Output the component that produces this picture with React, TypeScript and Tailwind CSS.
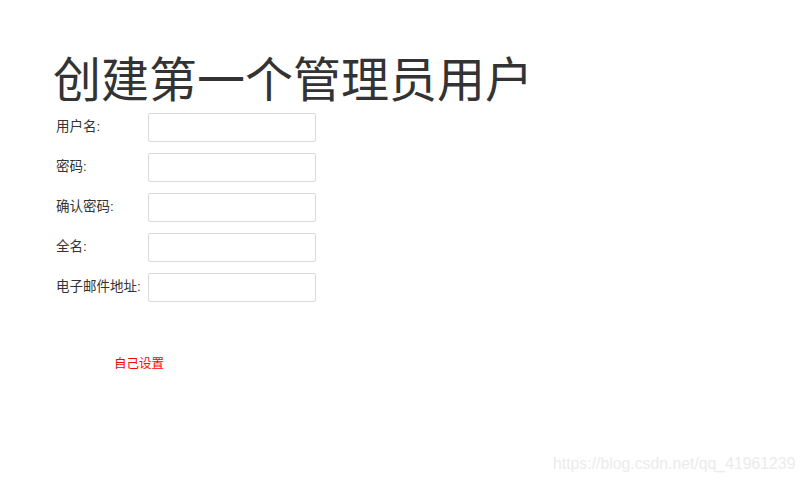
import React from "react";

const fields = ["用户名:", "密码:", "确认密码:", "全名:", "电子邮件地址:"];

export default function App() {
  return (
    <div
      className="relative w-[804px] h-[482px] bg-white overflow-hidden text-[#333]"
      style={{ fontFamily: '"Liberation Sans", "Noto Sans CJK SC", sans-serif' }}
    >
      <div className="pl-[53px] pt-[57px]">
        <h1 className="text-[48px] leading-[48px] font-normal text-[#333]">
          创建第一个管理员用户
        </h1>
        <div className="mt-[8px] flex flex-col gap-[11px] pl-[3px]">
          {fields.map((f) => (
            <div key={f} className="flex items-center">
              <label className="w-[92px] text-[13.5px] text-[#333] whitespace-nowrap">{f}</label>
              <input
                type="text"
                className="w-[168px] h-[29px] border border-[#d9d9d9] rounded-[2px] bg-white outline-none"
              />
            </div>
          ))}
        </div>
        <div className="mt-[55px] pl-[61px] text-[12.5px] leading-[14px] text-[#ff0000]">自己设置</div>
      </div>
      <div className="absolute left-[553px] top-[452px] text-[15.8px] leading-[24px] text-[#ebebeb] whitespace-nowrap">
        https://blog.csdn.net/qq_41961239
      </div>
    </div>
  );
}
